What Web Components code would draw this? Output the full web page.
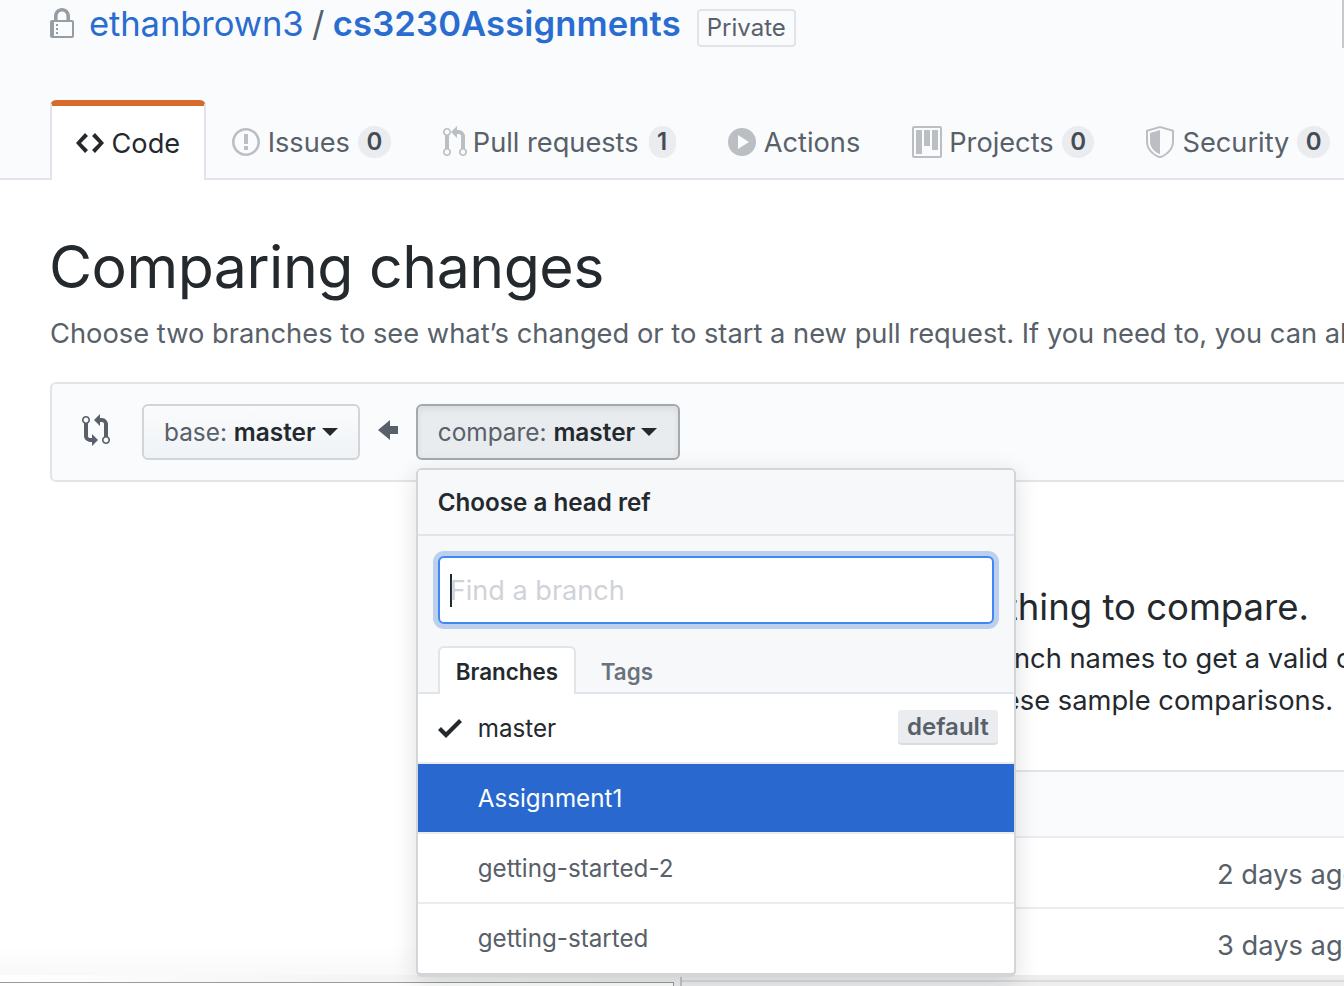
<!DOCTYPE html>
<html lang="en">
<head>
<meta charset="utf-8">
<title>Comparing changes</title>
<style>
    html, body { margin: 0; height: 986px; overflow: hidden; background: #fff; }
    body { font-family: Inter, "Liberation Sans", sans-serif; color: #24292e; }
</style>
</head>
<body>
<gh-page>
    <gh-repo-head owner="ethanbrown3" repo="cs3230Assignments">
        <gh-tab icon="code" selected>Code</gh-tab>
        <gh-tab icon="issue" count="0">Issues</gh-tab>
        <gh-tab icon="pull" count="1">Pull requests</gh-tab>
        <gh-tab icon="play">Actions</gh-tab>
        <gh-tab icon="project" count="0">Projects</gh-tab>
        <gh-tab icon="shield" count="0">Security</gh-tab>
    </gh-repo-head>
    <gh-compare-head></gh-compare-head>
    <gh-compare-bar>
        <gh-ref-button label="base" value="master"></gh-ref-button>
        <gh-icon name="arrow" class="arrow"></gh-icon>
        <gh-ref-button label="compare" value="master" open>
            <gh-branch-menu>
                <gh-branch-row current>master</gh-branch-row>
                <gh-branch-row active>Assignment1</gh-branch-row>
                <gh-branch-row>getting-started-2</gh-branch-row>
                <gh-branch-row last>getting-started</gh-branch-row>
            </gh-branch-menu>
        </gh-ref-button>
    </gh-compare-bar>
    <gh-blank-state></gh-blank-state>
    <gh-commit-table>
        <gh-commit-row>2 days ago</gh-commit-row>
        <gh-commit-row>3 days ago</gh-commit-row>
    </gh-commit-table>
</gh-page>

<script>
const ICONS = {
    lock: ['0 0 12 16', 'M4 13H3v-1h1v1zm8-6v7c0 .55-.45 1-1 1H1c-.55 0-1-.45-1-1V7c0-.55.45-1 1-1h1V4c0-2.2 1.8-4 4-4s4 1.8 4 4v2h1c.55 0 1 .45 1 1zM3.8 6h4.41V4c0-1.22-.98-2.2-2.2-2.2-1.22 0-2.2.98-2.2 2.2v2H3.8zM11 7H2v7h9V7zM4 8H3v1h1V8zm0 2H3v1h1v-1z'],
    code: ['0 0 14 16', 'M9.5 3L8 4.5 11.5 8 8 11.5 9.5 13 14 8 9.5 3zm-5 0L0 8l4.5 5L6 11.5 2.5 8 6 4.5 4.5 3z'],
    issue: ['0 0 14 16', 'M7 2.3c3.14 0 5.7 2.56 5.7 5.7s-2.56 5.7-5.7 5.7A5.71 5.71 0 011.3 8c0-3.14 2.56-5.7 5.7-5.7zM7 1C3.14 1 0 4.14 0 8s3.14 7 7 7 7-3.14 7-7-3.14-7-7-7zm1 3H6v5h2V4zm0 6H6v2h2v-2z'],
    pull: ['0 0 12 16', 'M11 11.28V5c-.03-.78-.34-1.47-.94-2.06C9.46 2.35 8.78 2.03 8 2H7V0L4 3l3 3V4h1c.27.02.48.11.69.31.21.2.3.42.31.69v6.28A1.993 1.993 0 0010 15a1.993 1.993 0 001-3.72zm-1 2.92c-.66 0-1.2-.55-1.2-1.2 0-.65.55-1.2 1.2-1.2.65 0 1.2.55 1.2 1.2 0 .65-.55 1.2-1.2 1.2zM4 3c0-1.11-.89-2-2-2a1.993 1.993 0 00-1 3.72v6.56A1.993 1.993 0 002 15a1.993 1.993 0 001-3.72V4.72c.59-.34 1-.98 1-1.72zm-.8 10c0 .66-.55 1.2-1.2 1.2-.65 0-1.2-.55-1.2-1.2 0-.65.55-1.2 1.2-1.2.65 0 1.2.55 1.2 1.2zM2 4.2C1.34 4.2.8 3.65.8 3c0-.65.55-1.2 1.2-1.2.65 0 1.2.55 1.2 1.2 0 .65-.55 1.2-1.2 1.2z'],
    play: ['0 0 14 16', 'M14 8A7 7 0 110 8a7 7 0 0114 0zM5 11.5L10.5 8 5 4.5v7z'],
    project: ['0 0 15 16', 'M10 12h3V2h-3v10zm-4-2h3V2H6v8zm-4 4h3V2H2v12zm-1 1h13V1H1v14zM14 0H1a1 1 0 00-1 1v14a1 1 0 001 1h13a1 1 0 001-1V1a1 1 0 00-1-1z'],
    shield: ['0 0 14 16', 'M0 2l7-2 7 2v6.02C14 12.69 8.69 16 7 16c-1.69 0-7-3.31-7-7.98V2zm1 .75L7 1l6 1.75v5.268C13 12.104 8.449 15 7 15c-1.449 0-6-2.896-6-6.982V2.75zM7 2L2 3.5v4.515C2 11.518 5.793 14 7 14V2z'],
    compare: ['0 0 14 16', 'M5 12H4c-.27-.02-.48-.11-.69-.31-.21-.2-.3-.42-.31-.69V4.72A1.993 1.993 0 002 1a1.993 1.993 0 00-1 3.72V11c.03.78.34 1.47.94 2.06.6.59 1.28.91 2.06.94h1v2l3-3-3-3v2zM2 1.8c.66 0 1.2.55 1.2 1.2 0 .65-.55 1.2-1.2 1.2C1.34 4.2.8 3.65.8 3c0-.65.55-1.2 1.2-1.2zm11 9.48V5c-.03-.78-.34-1.47-.94-2.06-.6-.59-1.28-.91-2.06-.94H9V0L6 3l3 3V4h1c.27.02.48.11.69.31.21.2.3.42.31.69v6.28A1.993 1.993 0 0012 15a1.993 1.993 0 001-3.72zm-1 2.92c-.66 0-1.2-.55-1.2-1.2 0-.65.55-1.2 1.2-1.2.65 0 1.2.55 1.2 1.2 0 .65-.55 1.2-1.2 1.2z'],
    arrow: ['0 0 10 16', 'M6 3L0 8l6 5v-3h4V6H6V3z'],
    check: ['0 0 12 16', 'M12 5l-8 8-4-4 1.5-1.5L4 10l6.5-6.5L12 5z']
};

class GhIcon extends HTMLElement {
    connectedCallback() {
        const [box, d] = ICONS[this.getAttribute('name')];
        const parts = box.split(' ');
        const scale = Number(this.getAttribute('scale') || 2);
        this.attachShadow({ mode: 'open' });
        this.shadowRoot.innerHTML = `
            <style>
                :host { display: inline-flex; flex: none; color: inherit; }
                svg { display: block; fill: currentColor; }
            </style>
            <svg viewBox="${box}" width="${parts[2] * scale}" height="${parts[3] * scale}"><path fill-rule="evenodd" d="${d}"/></svg>
        `;
    }
}

class GhPage extends HTMLElement {
    constructor() {
        super();
        this.attachShadow({ mode: 'open' });
        this.shadowRoot.innerHTML = `
            <style>
                :host { display: block; position: relative; width: 1344px; height: 986px; overflow: hidden; }
                /* the bits of other windows that show at the edges of the photo */
                .edge { position: absolute; left: 0; right: 0; top: 975px; height: 11px; background: linear-gradient(90deg, #fff 0, #f7f7f8 20%, #eeeeef 45%); }
                .fade { position: absolute; left: 0; width: 681px; top: 945px; height: 30px; background: linear-gradient(#fff0, #00000006); }
                .box { position: absolute; left: -4px; width: 678px; top: 982px; height: 10px; background: #fff; border: 1px solid #9a9a9a; box-sizing: border-box; }
                .tick { position: absolute; left: 680px; width: 2px; top: 975px; height: 11px; background: #c4c4c6; }
                .right { position: absolute; left: 682px; right: 0; top: 980px; height: 2px; background: #d9dadd; }
                .scroll { position: absolute; right: 0; top: 0; width: 2px; height: 48px; background: #c9c9cb; }
            </style>
            <slot></slot>
            <div class="fade"></div>
            <div class="edge"></div>
            <div class="box"></div>
            <div class="tick"></div>
            <div class="right"></div>
            <div class="scroll"></div>
        `;
    }
}

class GhRepoHead extends HTMLElement {
    connectedCallback() {
        this.attachShadow({ mode: 'open' });
        this.shadowRoot.innerHTML = `
            <style>
                :host { display: block; box-sizing: border-box; height: 180px; background: #fafbfc; border-bottom: 2px solid #e1e4e8; padding-left: 50px; }
                .title { display: flex; align-items: center; height: 46px; font-size: 34.6px; letter-spacing: -.1px; color: #586069; }
                .title gh-icon { color: #959da5; margin: 2px 15px 0 0; }
                a { color: #2a6dd0; text-decoration: none; }
                .sep { margin: 0 8.5px; }
                b { font-weight: 600; letter-spacing: .12px; }
                .label { margin-left: 16px; border: 2px solid #e1e4e8; border-radius: 4px; font-size: 24px; letter-spacing: 0; line-height: 34px; padding: 0 8px; height: 38px; box-sizing: border-box; margin-top: 10px; }
                nav { display: flex; margin: 54px 0 0 0; }
            </style>
            <div class="title">
                <gh-icon name="lock"></gh-icon>
                <a href="#">${this.getAttribute('owner')}</a><span class="sep">/</span><a href="#"><b>${this.getAttribute('repo')}</b></a>
                <span class="label">Private</span>
            </div>
            <nav><slot></slot></nav>
        `;
    }
}

class GhTab extends HTMLElement {
    connectedCallback() {
        const count = this.getAttribute('count');
        this.attachShadow({ mode: 'open' });
        this.shadowRoot.innerHTML = `
            <style>
                :host { display: flex; align-items: center; box-sizing: border-box; height: 78px; padding: 6px 26px 0; gap: 8px; font-size: 27.2px; color: #586069; white-space: nowrap; }
                :host([selected]) { height: 80px; padding: 0 23.5px; background: #fff; color: #24292e; border: 2px solid #e1e4e8; border-top: 6px solid #d86a2c; border-bottom: 0; border-radius: 6px 6px 0 0; }
                gh-icon { color: #bbbfc4; }
                :host([selected]) gh-icon { color: #24292e; }
                :host([icon="pull"]) gh-icon { margin-right: -2px; }
                :host([icon="pull"]) .count { margin-left: 2px; }
                :host([icon="project"]) gh-icon { margin-right: -1px; }
                .count { display: inline-block; height: 32px; line-height: 32px; padding: 0 8.5px; box-sizing: border-box; border-radius: 16px; background: #eaecef; color: #444d56; font-size: 24px; font-weight: 600; text-align: center; }
            </style>
            <gh-icon name="${this.getAttribute('icon')}"></gh-icon>
            <span><slot></slot></span>
            ${count === null ? '' : `<span class="count">${count}</span>`}
        `;
    }
}

class GhCompareHead extends HTMLElement {
    constructor() {
        super();
        this.attachShadow({ mode: 'open' });
        this.shadowRoot.innerHTML = `
            <style>
                :host { display: block; padding: 48px 0 0 50px; white-space: nowrap; }
                h1 { margin: 0 0 0 -1px; font-size: 59px; font-weight: 400; line-height: 78px; letter-spacing: -.5px; color: #24292e; }
                p { margin: 8px 0 0; font-size: 27.3px; line-height: 40px; color: #586069; }
            </style>
            <h1>Comparing changes</h1>
            <p>Choose two branches to see what’s changed or to start a new pull request. If you need to, you can also compare across forks.</p>
        `;
    }
}

class GhCompareBar extends HTMLElement {
    constructor() {
        super();
        this.attachShadow({ mode: 'open' });
        this.shadowRoot.innerHTML = `
            <style>
                :host { display: flex; align-items: center; box-sizing: border-box; height: 100px; margin: 28px -20px 0 50px; padding: 0 0 0 30px; background: #fafbfc; border: 2px solid #e1e4e8; border-radius: 6px; color: #586069; }
                gh-icon { margin: -4px 32px 0 0; }
                ::slotted(.arrow) { margin: -4px 18px 0; color: #586069; }
            </style>
            <gh-icon name="compare"></gh-icon>
            <slot></slot>
        `;
    }
}

class GhRefButton extends HTMLElement {
    connectedCallback() {
        this.attachShadow({ mode: 'open' });
        this.shadowRoot.innerHTML = `
            <style>
                :host { display: block; position: relative; flex: none; }
                .btn { display: flex; align-items: center; box-sizing: border-box; height: 56px; padding: 0 20px; gap: 6px; font-size: 24.4px; white-space: nowrap; color: #586069; background: linear-gradient(#fafbfc, #eff3f6); border: 2px solid #d1d5da; border-radius: 6px; }
                :host([open]) .btn { padding-right: 21px; background: #e9ecef; border-color: #a5a9ae; box-shadow: inset 0 3px 6px rgba(27,31,35,.08); }
                b { font-weight: 600; color: #24292e; }
                i { display: block; border: 8px solid transparent; border-top-color: #24292e; border-bottom: 0; }
            </style>
            <div class="btn"><span>${this.getAttribute('label')}: <b>${this.getAttribute('value')}</b></span><i></i></div>
            <slot></slot>
        `;
    }
}

class GhBranchMenu extends HTMLElement {
    constructor() {
        super();
        this.attachShadow({ mode: 'open' });
        this.shadowRoot.innerHTML = `
            <style>
                :host { display: block; position: absolute; z-index: 5; top: 64px; left: 0; box-sizing: border-box; width: 600px; height: 509px; background: #fff; border: 2px solid #d3d5d9; border-bottom-width: 4px; border-radius: 6px; box-shadow: 0 6px 24px rgba(27,31,35,.15); overflow: hidden; color: #24292e; }
                header { box-sizing: border-box; height: 66px; padding: 0 20px; display: flex; align-items: center; background: #f6f8fa; border-bottom: 2px solid #e1e4e8; font-size: 24.2px; font-weight: 600; }
                .filter { box-sizing: border-box; height: 158px; padding: 20px 20px 0; background: #f6f8fa; border-bottom: 2px solid #e1e4e8; position: relative; }
                .input { display: flex; align-items: center; box-sizing: border-box; height: 68px; padding-left: 10px; background: #fff; border: 2px solid #3f87f5; border-radius: 6px; box-shadow: 0 0 0 5px #bcd0ee; font-size: 27.1px; color: #cfd3d8; white-space: nowrap; }
                .caret { width: 2px; height: 33px; background: #24292e; margin-right: -2px; }
                .tabs { position: absolute; left: 20px; bottom: -2px; display: flex; font-size: 22.4px; font-weight: 600; }
                .tabs span { box-sizing: border-box; height: 48px; }
                .on { width: 138px; padding-left: 16px; line-height: 48px; background: #fff; border: 2px solid #e1e4e8; border-bottom: 0; border-radius: 6px 6px 0 0; }
                .off { padding-left: 25px; line-height: 52px; color: #6a737d; }
            </style>
            <header>Choose a head ref</header>
            <div class="filter">
                <div class="input"><span class="caret"></span>Find a branch</div>
                <div class="tabs"><span class="on">Branches</span><span class="off">Tags</span></div>
            </div>
            <slot></slot>
        `;
    }
}

class GhBranchRow extends HTMLElement {
    connectedCallback() {
        const current = this.hasAttribute('current');
        this.attachShadow({ mode: 'open' });
        this.shadowRoot.innerHTML = `
            <style>
                :host { display: flex; align-items: center; box-sizing: border-box; height: 70px; padding: 0 16px 0 20px; border-bottom: 2px solid #eaecef; font-size: 24.2px; color: #586069; }
                :host([current]) { color: #24292e; }
                :host([active]) { background: #2968ce; background-clip: padding-box; color: #fff; }
                :host([last]) { border-bottom: 0; padding-bottom: 2px; }
                .mark { width: 40px; flex: none; color: #24292e; display: flex; }
                .name { flex: 1; }
                .tag { height: 35px; line-height: 33px; padding: 0 9px; box-sizing: border-box; background: #eaecef; border-radius: 4px; box-shadow: inset 0 -2px 0 #d9dce0; color: #586069; font-weight: 600; font-size: 24px; margin-top: -1px; }
            </style>
            <span class="mark">${current ? '<gh-icon name="check"></gh-icon>' : ''}</span>
            <span class="name"><slot></slot></span>
            ${current ? '<span class="tag">default</span>' : ''}
        `;
    }
}

class GhBlankState extends HTMLElement {
    constructor() {
        super();
        this.attachShadow({ mode: 'open' });
        this.shadowRoot.innerHTML = `
            <style>
                :host { display: block; box-sizing: border-box; width: 1960px; margin-left: 50px; padding-top: 100px; text-align: center; white-space: nowrap; }
                h3 { margin: 0; font-size: 36.5px; font-weight: 400; line-height: 50px; color: #24292e; }
                p { margin: 0; font-size: 27.3px; line-height: 42px; color: #24292e; }
                h3 + p { margin-top: 6px; }
            </style>
            <h3>There isn’t anything to compare.</h3>
            <p>You’ll need to use two different branch names to get a valid comparison.</p>
            <p>Check out some of these sample comparisons.</p>
        `;
    }
}

class GhCommitTable extends HTMLElement {
    constructor() {
        super();
        this.attachShadow({ mode: 'open' });
        this.shadowRoot.innerHTML = `
            <style>
                :host { display: block; margin: 48px 0 0 700px; border-top: 2px solid #e1e4e8; }
                .top { height: 64px; background: #fafbfc; border-bottom: 2px solid #eaecef; }
            </style>
            <div class="top"></div>
            <slot></slot>
        `;
    }
}

class GhCommitRow extends HTMLElement {
    constructor() {
        super();
        this.attachShadow({ mode: 'open' });
        this.shadowRoot.innerHTML = `
            <style>
                :host { display: flex; align-items: center; box-sizing: border-box; height: 71px; padding: 4px 0 0 517px; border-bottom: 2px solid #eaecef; font-size: 27.3px; color: #586069; white-space: nowrap; }
            </style>
            <slot></slot>
        `;
    }
}

customElements.define('gh-icon', GhIcon);
customElements.define('gh-page', GhPage);
customElements.define('gh-repo-head', GhRepoHead);
customElements.define('gh-tab', GhTab);
customElements.define('gh-compare-head', GhCompareHead);
customElements.define('gh-compare-bar', GhCompareBar);
customElements.define('gh-ref-button', GhRefButton);
customElements.define('gh-branch-menu', GhBranchMenu);
customElements.define('gh-branch-row', GhBranchRow);
customElements.define('gh-blank-state', GhBlankState);
customElements.define('gh-commit-table', GhCommitTable);
customElements.define('gh-commit-row', GhCommitRow);
</script>
</body>
</html>
